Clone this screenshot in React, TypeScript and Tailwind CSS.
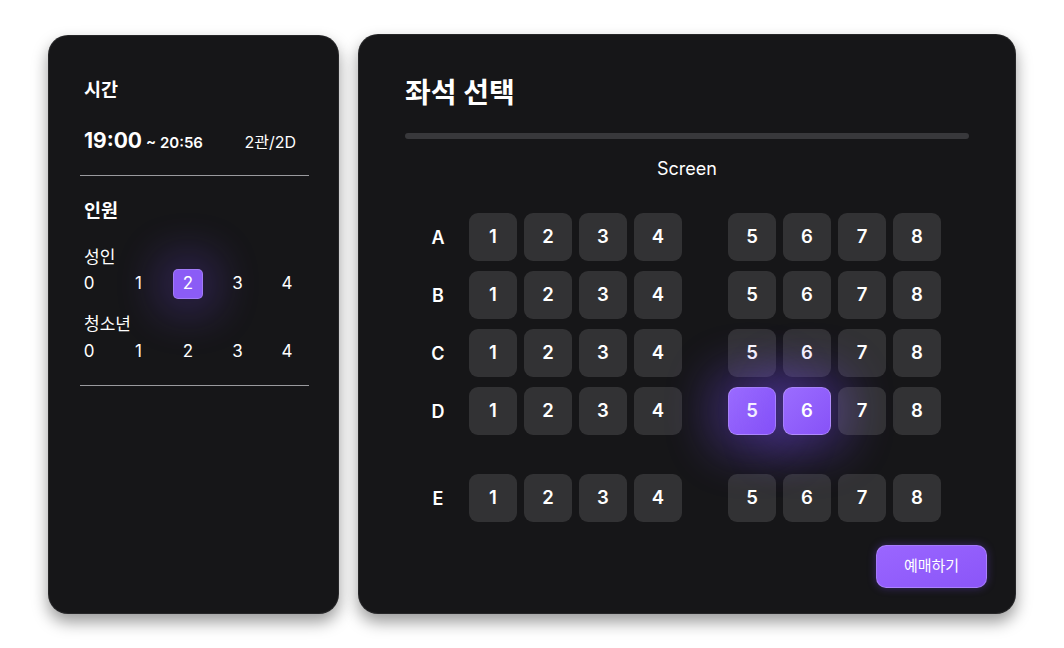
import React, { useState } from 'react';

const FONT = { fontFamily: 'Inter, "Noto Sans CJK KR", sans-serif' };

const ROWS = ['A', 'B', 'C', 'D', 'E'];

function CountPicker({ value, onChange }: { value: number; onChange: (n: number) => void }) {
  return (
    <div className="flex gap-[19.5px] ml-[-10px]">
      {[0, 1, 2, 3, 4].map((n) => (
        <button
          key={n}
          onClick={() => onChange(n)}
          className={
            n === value
              ? 'w-[30px] h-[30px] rounded-[5px] bg-[#8b5cf6] text-white text-[17px] flex items-center justify-center shadow-[0_0_40px_18px_rgba(124,77,255,0.2)] border border-white/20'
              : 'w-[30px] h-[30px] rounded-[5px] text-white text-[17px] flex items-center justify-center'
          }
        >
          {n}
        </button>
      ))}
    </div>
  );
}

function Seat({ label, selected, onClick }: { label: number; selected: boolean; onClick: () => void }) {
  return (
    <button
      onClick={onClick}
      className={
        selected
          ? 'w-12 h-12 rounded-[9px] bg-gradient-to-br from-[#9b6cff] to-[#8752f7] border border-white/25 text-white text-[18.5px] font-semibold flex items-center justify-center shadow-[0_0_44px_20px_rgba(124,77,255,0.3)]'
          : 'w-12 h-12 rounded-[9px] bg-white/[0.12] text-white text-[18.5px] font-semibold flex items-center justify-center'
      }
    >
      {label}
    </button>
  );
}

export default function App() {
  const [adult, setAdult] = useState(2);
  const [teen, setTeen] = useState(-1);
  const [picked, setPicked] = useState<string[]>(['D5', 'D6']);

  const toggle = (id: string) =>
    setPicked((p) => (p.includes(id) ? p.filter((x) => x !== id) : [...p, id]));

  return (
    <div className="w-full h-screen bg-white flex items-center justify-center gap-[19px]" style={FONT}>
      {/* 왼쪽: 시간 / 인원 */}
      <div className="w-[291px] h-[579px] rounded-[20px] bg-[#161618] border border-white/[0.07] shadow-[0_8px_16px_rgba(0,0,0,0.4)] pl-[31px] pr-[29px] pt-[41px] text-white">
        <div className="px-1 text-[18.5px] leading-6 font-bold">시간</div>
        <div className="mt-[26px] pl-1 pr-[13px] flex items-baseline justify-between">
          <div className="flex items-baseline">
            <span className="text-[21px] leading-7 font-bold">19:00</span>
            <span className="ml-1 text-[15px] font-semibold">~ 20:56</span>
          </div>
          <span className="text-[16px]">2관/2D</span>
        </div>
        <div className="mt-5 h-px bg-[#9a9a9e]" />

        <div className="mt-[22px] px-1 text-[18.5px] leading-6 font-bold">인원</div>
        <div className="mt-6 px-1 text-[17px] leading-[22px]">성인</div>
        <div className="mt-px px-1">
          <CountPicker value={adult} onChange={setAdult} />
        </div>
        <div className="mt-[14px] px-1 text-[17px] leading-[22px]">청소년</div>
        <div className="mt-[2px] px-1">
          <CountPicker value={teen} onChange={setTeen} />
        </div>
        <div className="mt-[18px] h-px bg-[#9a9a9e]" />
      </div>

      {/* 오른쪽: 좌석 선택 */}
      <div className="w-[658px] h-[580px] rounded-[20px] bg-[#161618] border border-white/[0.07] shadow-[0_8px_16px_rgba(0,0,0,0.4)] px-[46px] pt-[40px] text-white flex flex-col">
        <h1 className="text-[28px] leading-9 font-bold">좌석 선택</h1>
        <div className="mt-[22px] h-[6px] rounded-full bg-[#38383b]" />
        <div className="mt-[17px] text-center text-[18px] leading-[26px]">Screen</div>

        <div className="mt-[31px] ml-[21px] flex flex-col gap-[10px]">
          {ROWS.map((r) => (
            <div key={r} className={r === 'E' ? 'mt-[29px] flex items-center' : 'flex items-center'}>
              <span className="w-6 text-center text-[18px] font-semibold">{r}</span>
              <div className="ml-[19px] flex gap-[7px]">
                {[1, 2, 3, 4].map((n) => (
                  <Seat key={n} label={n} selected={picked.includes(r + n)} onClick={() => toggle(r + n)} />
                ))}
              </div>
              <div className="ml-[46px] flex gap-[7px]">
                {[5, 6, 7, 8].map((n) => (
                  <Seat key={n} label={n} selected={picked.includes(r + n)} onClick={() => toggle(r + n)} />
                ))}
              </div>
            </div>
          ))}
        </div>

        <div className="mt-[23px] -mr-[18px] flex justify-end">
          <button className="w-[111px] h-[43px] rounded-[10px] bg-gradient-to-br from-[#9a66ff] to-[#8b55f8] border border-white/20 text-[15px] text-white shadow-[0_0_8px_rgba(124,77,255,0.35)]">
            예매하기
          </button>
        </div>
      </div>
    </div>
  );
}
